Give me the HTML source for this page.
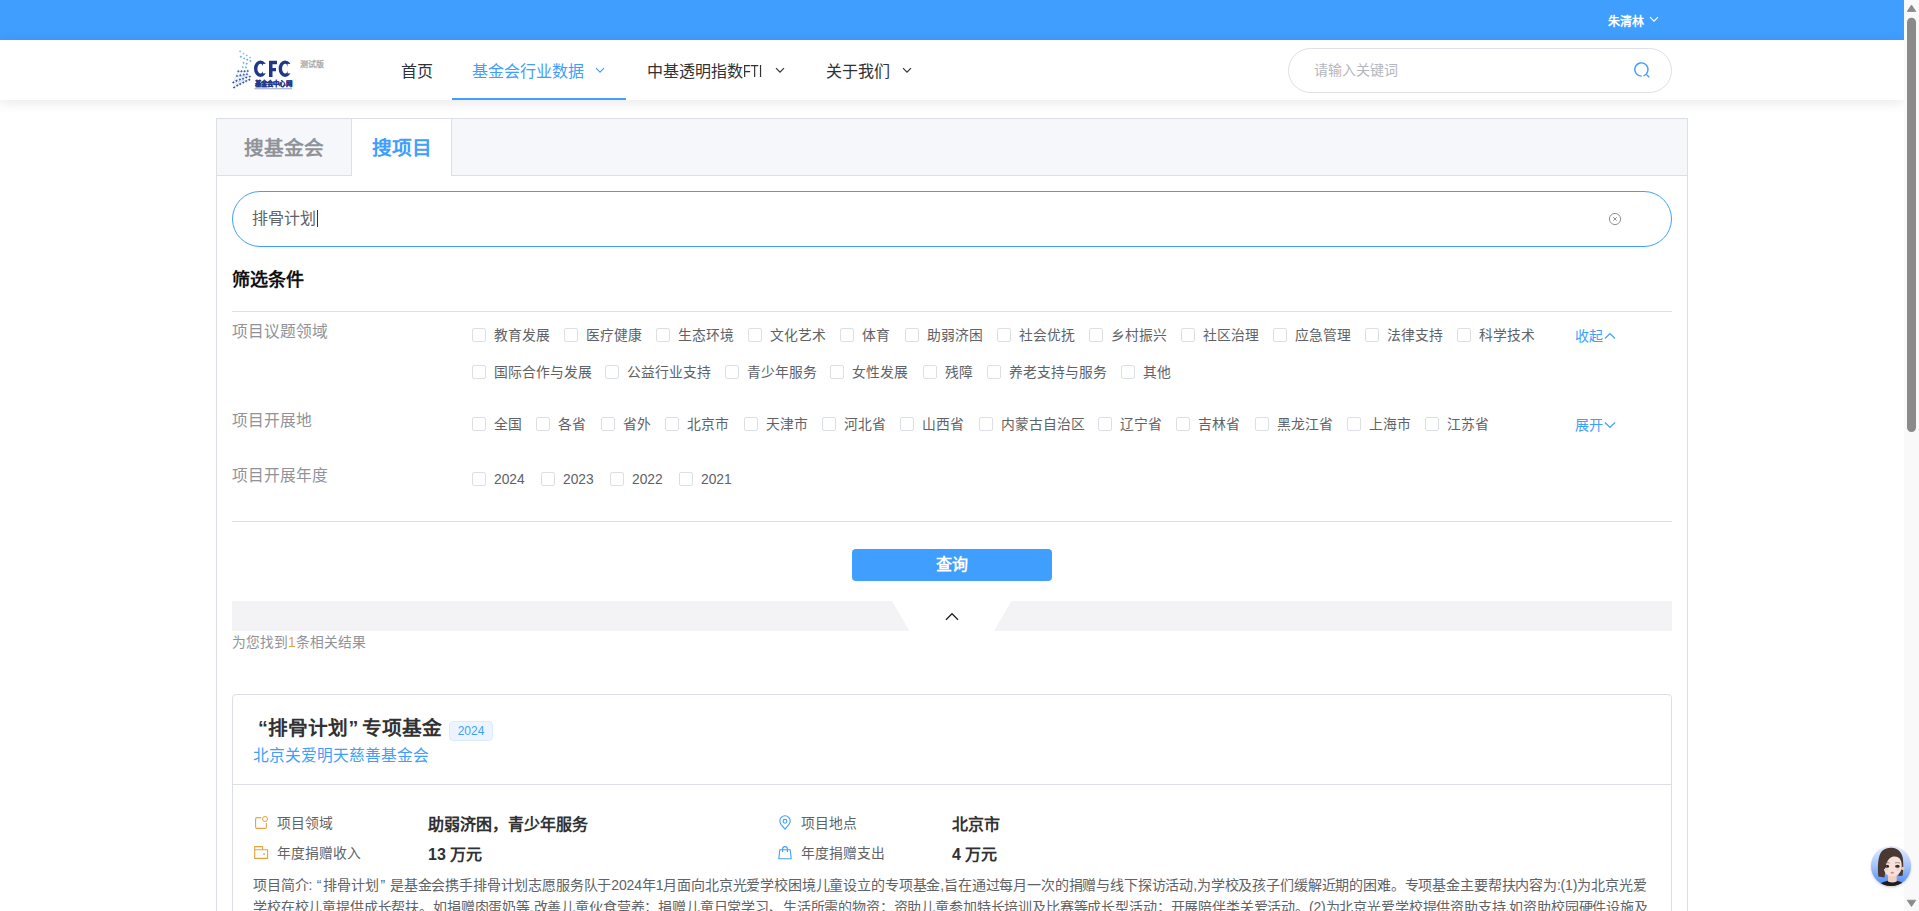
<!DOCTYPE html>
<html lang="zh-CN">
<head>
<meta charset="utf-8">
<title>搜项目</title>
<style>
*{box-sizing:border-box;margin:0;padding:0}
html,body{width:1919px;height:911px;overflow:hidden;background:#fff}
body{font-family:"Liberation Sans",sans-serif;position:relative;color:#303133}
.abs{position:absolute}
.nw{white-space:nowrap}
#topbar{position:absolute;left:0;top:0;width:1904px;height:40px;background:#409eff}
#user{position:absolute;left:1608px;top:13px;font-size:12px;font-weight:bold;color:#fff;line-height:18px;white-space:nowrap}
#header{position:absolute;left:0;top:40px;width:1904px;height:60px;background:#fff;box-shadow:0 2px 12px 0 rgba(0,0,0,.1);z-index:2}
.nav{position:absolute;top:2px;height:60px;font-size:16px;line-height:60px;color:#303133;white-space:nowrap}
.nav.active{color:#409eff}
.uline{position:absolute;left:452px;top:58px;width:174px;height:2px;background:#409eff}
#hsearch{position:absolute;left:1288px;top:8px;width:384px;height:45px;border:1px solid #dcdfe6;border-radius:23px}
#hsearch .ph{position:absolute;left:25px;top:0px;line-height:43px;font-size:14px;color:#b4b7bd;white-space:nowrap}
#panel{position:absolute;left:216px;top:118px;width:1472px;height:800px;border:1px solid #dcdfe6;border-bottom:none}
#tabbar{position:absolute;left:0;top:0;width:1470px;height:57px;background:#f5f7fa;border-bottom:1px solid #dcdfe6}
.tab{position:absolute;top:0;height:57px;font-size:19.7px;font-weight:bold;line-height:59px;color:#909399;white-space:nowrap}
.tab.active{background:#fff;color:#409eff;border-left:1px solid #dcdfe6;border-right:1px solid #dcdfe6}
#kw{position:absolute;left:232px;top:191px;width:1440px;height:56px;border:1px solid #409eff;border-radius:28px;background:#fff}
#kw .t{position:absolute;left:19px;top:0;line-height:54px;font-size:16px;color:#606266;white-space:nowrap}
#kw .caret{position:absolute;left:83.5px;top:18px;width:1px;height:17px;background:#303133}
.h3{position:absolute;left:232px;top:267px;font-size:18px;font-weight:bold;color:#111;line-height:26px;white-space:nowrap}
.hr{position:absolute;left:232px;width:1440px;height:1px;background:#dcdfe6}
.flabel{position:absolute;left:232px;font-size:15.75px;color:#909399;line-height:22px;white-space:nowrap}
.cb{position:absolute;height:14px;white-space:nowrap;font-size:13.8px;color:#606266}
.cb i{position:absolute;left:0;top:0;width:14px;height:14px;border:1px solid #dcdfe6;border-radius:2px;background:#fff}
.cb span{position:absolute;left:22px;top:-2px;line-height:20px}
.more{position:absolute;left:1575px;font-size:14px;color:#409eff;line-height:20px;white-space:nowrap}
#btn{position:absolute;left:852px;top:549px;width:200px;height:32px;background:#409eff;border-radius:4px;color:#fff;font-size:16px;font-weight:bold;text-align:center;line-height:32px}
#strip{position:absolute;left:232px;top:601px;width:1440px;height:30px;background:#f3f3f5}
#count{position:absolute;left:232px;top:632.5px;font-size:13.8px;font-weight:500;color:#909399;line-height:20px;white-space:nowrap}
#card{position:absolute;left:232px;top:694px;width:1440px;height:300px;border:1px solid #dcdfe6;border-radius:4px}
#cardhead{position:absolute;left:0;top:0;width:1438px;height:90px;border-bottom:1px solid #dcdfe6}
.ctitle{position:absolute;left:25px;top:18px;font-size:19.7px;font-weight:bold;color:#303133;line-height:30px;white-space:nowrap}
.tag{position:absolute;left:216px;top:26px;width:44px;height:20px;background:#ecf5ff;border:1px solid #d9ecff;border-radius:4px;color:#409eff;font-size:12px;line-height:18px;text-align:center}
.csub{position:absolute;left:20px;top:49px;font-size:15.75px;color:#409eff;line-height:24px;white-space:nowrap}
.dl{position:absolute;font-size:13.8px;color:#606266;line-height:22px;white-space:nowrap}
.dv{position:absolute;font-size:16px;font-weight:bold;color:#303133;line-height:22px;white-space:nowrap}
.para{position:absolute;font-size:14px;color:#606266;line-height:22px;white-space:nowrap;letter-spacing:-0.155px}
.qo{margin-left:0.8px;margin-right:2px}.qc{margin-left:2px;margin-right:1px}
#sb{position:absolute;left:1904px;top:0;width:15px;height:911px;background:#f9f9f9;z-index:3}
</style>
</head>
<body>
<div id="topbar">
  <div id="user">朱清林</div>
  <svg class="abs" style="left:1649px;top:16px" width="10" height="7" viewBox="0 0 10 7"><path d="M1 1.2 L5 5.2 L9 1.2" fill="none" stroke="#fff" stroke-width="1.2"/></svg>
</div>

<div id="header">
  <svg class="abs" style="left:228px;top:6px" width="100" height="50" viewBox="228 46 100 50">
    <g stroke="#6b8fc4" stroke-width="0.35" fill="none" opacity="0.7">
      <path d="M238.3 71.3 L247.8 71 M237 76 L249.9 76.6 M233.3 82.4 L249.3 79.7 M234.1 87.4 L246.2 81.1 M238.3 71.3 L233.3 82.4 M241.4 71.3 L234.1 87.4 M244.6 71.3 L237.2 85.5 M247.8 71 L240.1 84"/>
    </g>
    <path d="M240.1 49.95 L240.57 50.83 L241.45 51.3 L240.57 51.77 L240.1 52.65 L239.63 51.77 L238.75 51.3 L239.63 50.83Z" fill="#7cc3db"/><path d="M243.6 52.25 L244.07 53.13 L244.95 53.6 L244.07 54.07 L243.6 54.95 L243.13 54.07 L242.25 53.6 L243.13 53.13Z" fill="#7cc3db"/><path d="M246.7 54.15 L247.17 55.03 L248.05 55.5 L247.17 55.97 L246.7 56.85 L246.23 55.97 L245.35 55.5 L246.23 55.03Z" fill="#7cc3db"/><path d="M250.1 56.25 L250.57 57.13 L251.45 57.6 L250.57 58.07 L250.1 58.95 L249.63 58.07 L248.75 57.6 L249.63 57.13Z" fill="#7cc3db"/><path d="M240.9 55.45 L241.37 56.33 L242.25 56.8 L241.37 57.27 L240.9 58.15 L240.43 57.27 L239.55 56.8 L240.43 56.33Z" fill="#5aa6cc"/><path d="M244.1 57.05 L244.57 57.93 L245.45 58.4 L244.57 58.87 L244.1 59.75 L243.63 58.87 L242.75 58.4 L243.63 57.93Z" fill="#5aa6cc"/><path d="M247.2 58.35 L247.67 59.23 L248.55 59.7 L247.67 60.17 L247.2 61.05 L246.73 60.17 L245.85 59.7 L246.73 59.23Z" fill="#5aa6cc"/><path d="M250.4 59.65 L250.87 60.53 L251.75 61.0 L250.87 61.47 L250.4 62.35 L249.93 61.47 L249.05 61.0 L249.93 60.53Z" fill="#5aa6cc"/><path d="M243.6 61.55 L244.07 62.43 L244.95 62.9 L244.07 63.37 L243.6 64.25 L243.13 63.37 L242.25 62.9 L243.13 62.43Z" fill="#5aa6cc"/><path d="M246.7 62.35 L247.17 63.23 L248.05 63.7 L247.17 64.17 L246.7 65.05 L246.23 64.17 L245.35 63.7 L246.23 63.23Z" fill="#5aa6cc"/><path d="M242.8 65.75 L243.27 66.63 L244.15 67.1 L243.27 67.57 L242.8 68.45 L242.33 67.57 L241.45 67.1 L242.33 66.63Z" fill="#5aa6cc"/><path d="M245.9 65.95 L246.37 66.83 L247.25 67.3 L246.37 67.77 L245.9 68.65 L245.43 67.77 L244.55 67.3 L245.43 66.83Z" fill="#5aa6cc"/><path d="M238.3 69.85 L238.81 70.79 L239.75 71.3 L238.81 71.81 L238.3 72.75 L237.79 71.81 L236.85 71.3 L237.79 70.79Z" fill="#3a62a8"/><path d="M241.4 69.85 L241.91 70.79 L242.85 71.3 L241.91 71.81 L241.4 72.75 L240.89 71.81 L239.95 71.3 L240.89 70.79Z" fill="#3a62a8"/><path d="M244.6 69.85 L245.11 70.79 L246.05 71.3 L245.11 71.81 L244.6 72.75 L244.09 71.81 L243.15 71.3 L244.09 70.79Z" fill="#3a62a8"/><path d="M247.8 69.55 L248.31 70.49 L249.25 71.0 L248.31 71.51 L247.8 72.45 L247.29 71.51 L246.35 71.0 L247.29 70.49Z" fill="#3a62a8"/><path d="M237.0 74.55 L237.51 75.49 L238.45 76.0 L237.51 76.51 L237.0 77.45 L236.49 76.51 L235.55 76.0 L236.49 75.49Z" fill="#3a62a8"/><path d="M240.4 73.85 L240.91 74.79 L241.85 75.3 L240.91 75.81 L240.4 76.75 L239.89 75.81 L238.95 75.3 L239.89 74.79Z" fill="#3a62a8"/><path d="M243.8 73.25 L244.31 74.19 L245.25 74.7 L244.31 75.21 L243.8 76.15 L243.29 75.21 L242.35 74.7 L243.29 74.19Z" fill="#3a62a8"/><path d="M247.0 72.75 L247.51 73.69 L248.45 74.2 L247.51 74.71 L247.0 75.65 L246.49 74.71 L245.55 74.2 L246.49 73.69Z" fill="#3a62a8"/><path d="M249.9 75.15 L250.41 76.09 L251.35 76.6 L250.41 77.11 L249.9 78.05 L249.39 77.11 L248.45 76.6 L249.39 76.09Z" fill="#3a62a8"/><path d="M233.3 80.95 L233.81 81.89 L234.75 82.4 L233.81 82.91 L233.3 83.85 L232.79 82.91 L231.85 82.4 L232.79 81.89Z" fill="#2d4f9c"/><path d="M236.4 79.35 L236.91 80.29 L237.85 80.8 L236.91 81.31 L236.4 82.25 L235.89 81.31 L234.95 80.8 L235.89 80.29Z" fill="#2d4f9c"/><path d="M239.9 78.05 L240.41 78.99 L241.35 79.5 L240.41 80.01 L239.9 80.95 L239.39 80.01 L238.45 79.5 L239.39 78.99Z" fill="#2d4f9c"/><path d="M243.0 77.25 L243.51 78.19 L244.45 78.7 L243.51 79.21 L243.0 80.15 L242.49 79.21 L241.55 78.7 L242.49 78.19Z" fill="#2d4f9c"/><path d="M246.2 76.15 L246.71 77.09 L247.65 77.6 L246.71 78.11 L246.2 79.05 L245.69 78.11 L244.75 77.6 L245.69 77.09Z" fill="#2d4f9c"/><path d="M249.3 78.25 L249.81 79.19 L250.75 79.7 L249.81 80.21 L249.3 81.15 L248.79 80.21 L247.85 79.7 L248.79 79.19Z" fill="#2d4f9c"/><path d="M234.1 85.95 L234.61 86.89 L235.55 87.4 L234.61 87.91 L234.1 88.85 L233.59 87.91 L232.65 87.4 L233.59 86.89Z" fill="#2d4f9c"/><path d="M237.2 84.05 L237.71 84.99 L238.65 85.5 L237.71 86.01 L237.2 86.95 L236.69 86.01 L235.75 85.5 L236.69 84.99Z" fill="#2d4f9c"/><path d="M240.1 82.55 L240.61 83.49 L241.55 84.0 L240.61 84.51 L240.1 85.45 L239.59 84.51 L238.65 84.0 L239.59 83.49Z" fill="#2d4f9c"/><path d="M243.3 80.95 L243.81 81.89 L244.75 82.4 L243.81 82.91 L243.3 83.85 L242.79 82.91 L241.85 82.4 L242.79 81.89Z" fill="#2d4f9c"/><path d="M246.2 79.65 L246.71 80.59 L247.65 81.1 L246.71 81.61 L246.2 82.55 L245.69 81.61 L244.75 81.1 L245.69 80.59Z" fill="#2d4f9c"/>
    <ellipse cx="260.45" cy="68.65" rx="4.75" ry="6.55" fill="none" stroke="#1f3786" stroke-width="3.4"/><rect x="262.9" y="63.9" width="5.2" height="9.5" fill="#fff"/>
    <ellipse cx="285.1" cy="68.65" rx="4.75" ry="6.55" fill="none" stroke="#1f3786" stroke-width="3.4"/><rect x="287.6" y="63.9" width="5.2" height="9.5" fill="#fff"/>
    <path d="M269 60.7 H277 V64.2 H272.5 V68 H276 V71.2 H272.5 V77 H269 Z" fill="#1f3786"/>
    <text x="254.8" y="86" font-size="6.3" font-weight="900" fill="#1f3786" stroke="#1f3786" stroke-width="0.25" textLength="37" lengthAdjust="spacingAndGlyphs">基金会中心网</text>
    <rect x="254.5" y="88.1" width="37.5" height="1.2" fill="#aab4d2"/>
    <text x="299.5" y="66.6" font-size="8" font-weight="bold" fill="#a7a9ae" textLength="24" lengthAdjust="spacingAndGlyphs">测试版</text>
  </svg>
  <div class="nav" style="left:401px">首页</div>
  <div class="nav active" style="left:472px">基金会行业数据</div>
  <svg class="abs" style="left:595px;top:26.8px" width="10" height="7" viewBox="0 0 10 7"><path d="M1 1.2 L5 5.2 L9 1.2" fill="none" stroke="#409eff" stroke-width="1.15"/></svg>
  <div class="uline"></div>
  <div class="nav" style="left:647px">中基透明指数<span style="display:inline-block;transform:scaleX(0.8);transform-origin:0 50%">FTI</span></div>
  <svg class="abs" style="left:775px;top:26.8px" width="10" height="7" viewBox="0 0 10 7"><path d="M1 1.2 L5 5.2 L9 1.2" fill="none" stroke="#303133" stroke-width="1.15"/></svg>
  <div class="nav" style="left:826px">关于我们</div>
  <svg class="abs" style="left:902px;top:26.8px" width="10" height="7" viewBox="0 0 10 7"><path d="M1 1.2 L5 5.2 L9 1.2" fill="none" stroke="#303133" stroke-width="1.15"/></svg>
  <div id="hsearch">
    <div class="ph">请输入关键词</div>
    <svg class="abs" style="left:344px;top:12px" width="18" height="18" viewBox="0 0 18 18"><path d="M8.8 15.1 A6.6 6.6 0 1 1 10.4 14.8" fill="none" stroke="#409eff" stroke-width="1.35"/><path d="M13.4 13.6 L16.3 16.2" stroke="#409eff" stroke-width="1.35"/></svg>
  </div>
</div>

<div id="panel">
  <div id="tabbar"></div>
  <div class="tab" style="left:0;width:135px;padding-left:27px">搜基金会</div>
  <div class="tab active" style="left:134px;width:101px;padding-left:20px">搜项目</div>
</div>

<div id="kw"><div class="t">排骨计划</div><div class="caret"></div>
  <svg class="abs" style="left:1375px;top:20px" width="14" height="14" viewBox="0 0 14 14"><circle cx="7" cy="7" r="5.6" fill="none" stroke="#909399" stroke-width="1"/><path d="M5.3 5.3 L8.7 8.7 M8.7 5.3 L5.3 8.7" stroke="#909399" stroke-width="1"/></svg>
</div>

<div class="h3">筛选条件</div>
<div class="hr" style="top:311px"></div>

<div class="flabel" style="top:321px">项目议题领域</div>
<div class="flabel" style="top:410px">项目开展地</div>
<div class="flabel" style="top:465px">项目开展年度</div>
<div class="cb" style="left:472px;top:328px"><i></i><span>教育发展</span></div>
<div class="cb" style="left:564px;top:328px"><i></i><span>医疗健康</span></div>
<div class="cb" style="left:656px;top:328px"><i></i><span>生态环境</span></div>
<div class="cb" style="left:748px;top:328px"><i></i><span>文化艺术</span></div>
<div class="cb" style="left:840px;top:328px"><i></i><span>体育</span></div>
<div class="cb" style="left:905px;top:328px"><i></i><span>助弱济困</span></div>
<div class="cb" style="left:997px;top:328px"><i></i><span>社会优抚</span></div>
<div class="cb" style="left:1089px;top:328px"><i></i><span>乡村振兴</span></div>
<div class="cb" style="left:1181px;top:328px"><i></i><span>社区治理</span></div>
<div class="cb" style="left:1273px;top:328px"><i></i><span>应急管理</span></div>
<div class="cb" style="left:1365px;top:328px"><i></i><span>法律支持</span></div>
<div class="cb" style="left:1457px;top:328px"><i></i><span>科学技术</span></div>
<div class="cb" style="left:472px;top:365px"><i></i><span>国际合作与发展</span></div>
<div class="cb" style="left:605px;top:365px"><i></i><span>公益行业支持</span></div>
<div class="cb" style="left:725px;top:365px"><i></i><span>青少年服务</span></div>
<div class="cb" style="left:830px;top:365px"><i></i><span>女性发展</span></div>
<div class="cb" style="left:923px;top:365px"><i></i><span>残障</span></div>
<div class="cb" style="left:987px;top:365px"><i></i><span>养老支持与服务</span></div>
<div class="cb" style="left:1121px;top:365px"><i></i><span>其他</span></div>
<div class="cb" style="left:472px;top:417px"><i></i><span>全国</span></div>
<div class="cb" style="left:536px;top:417px"><i></i><span>各省</span></div>
<div class="cb" style="left:601px;top:417px"><i></i><span>省外</span></div>
<div class="cb" style="left:665px;top:417px"><i></i><span>北京市</span></div>
<div class="cb" style="left:744px;top:417px"><i></i><span>天津市</span></div>
<div class="cb" style="left:822px;top:417px"><i></i><span>河北省</span></div>
<div class="cb" style="left:900px;top:417px"><i></i><span>山西省</span></div>
<div class="cb" style="left:979px;top:417px"><i></i><span>内蒙古自治区</span></div>
<div class="cb" style="left:1098px;top:417px"><i></i><span>辽宁省</span></div>
<div class="cb" style="left:1176px;top:417px"><i></i><span>吉林省</span></div>
<div class="cb" style="left:1255px;top:417px"><i></i><span>黑龙江省</span></div>
<div class="cb" style="left:1347px;top:417px"><i></i><span>上海市</span></div>
<div class="cb" style="left:1425px;top:417px"><i></i><span>江苏省</span></div>
<div class="cb" style="left:472px;top:472px"><i></i><span>2024</span></div>
<div class="cb" style="left:541px;top:472px"><i></i><span>2023</span></div>
<div class="cb" style="left:610px;top:472px"><i></i><span>2022</span></div>
<div class="cb" style="left:679px;top:472px"><i></i><span>2021</span></div>
<div class="more" style="top:326px">收起</div>
<svg class="abs" style="left:1604px;top:332px" width="12" height="8" viewBox="0 0 12 8"><path d="M1 6.5 L6 1.5 L11 6.5" fill="none" stroke="#409eff" stroke-width="1.2"/></svg>
<div class="more" style="top:415px">展开</div>
<svg class="abs" style="left:1604px;top:421px" width="12" height="8" viewBox="0 0 12 8"><path d="M1 1.5 L6 6.5 L11 1.5" fill="none" stroke="#409eff" stroke-width="1.2"/></svg>

<div class="hr" style="top:521px"></div>
<div id="btn">查询</div>
<div id="strip"></div>
<svg class="abs" style="left:892px;top:601px" width="120" height="30" viewBox="0 0 120 30"><path d="M0 0 H119.5 L102 30 H17.5 Z" fill="#fff"/><path d="M54 18.7 L60 12.7 L66 18.7" fill="none" stroke="#222" stroke-width="1.3"/></svg>
<div id="count">为您找到<span style="color:#e6a23c">1</span>条相关结果</div>

<div id="card">
  <div id="cardhead">
    <div class="ctitle">“排骨计划<span style="margin-left:0.6px;margin-right:-1.5px">”</span> 专项基金</div>
    <div class="tag">2024</div>
    <div class="csub">北京关爱明天慈善基金会</div>
  </div>
</div>
<svg class="abs" style="left:250px;top:812px" width="22" height="52" viewBox="250 812 22 52">
  <path d="M261.2 817.6 H257 Q255.6 817.6 255.6 819 V827 Q255.6 828.4 257 828.4 H265 Q266.4 828.4 266.4 827 V823" fill="none" stroke="#e6a23c" stroke-width="1.1"/>
  <circle cx="265" cy="819" r="2.5" fill="none" stroke="#e6a23c" stroke-width="1"/>
  <path d="M254.7 849.8 H267.6 V858.4 H254.7 Z M254.7 849.8 V846.6 H262.6 V849.8" fill="none" stroke="#e6a23c" stroke-width="1.1"/>
  <rect x="263.3" y="853.3" width="1.6" height="1.6" fill="#e6a23c"/>
</svg>
<div class="dl" style="left:277px;top:813px">项目领域</div>
<div class="dv" style="left:428px;top:814px">助弱济困，青少年服务</div>
<div class="dl" style="left:277px;top:843px">年度捐赠收入</div>
<div class="dv" style="left:428px;top:844px">13 万元</div>
<svg class="abs" style="left:774px;top:812px" width="22" height="52" viewBox="774 812 22 52">
  <path d="M785 829.2 L781.2 824.6 Q779.8 822.8 779.8 821 A5.2 5.2 0 0 1 790.2 821 Q790.2 822.8 788.8 824.6 Z" fill="none" stroke="#409eff" stroke-width="1.1" stroke-linejoin="round"/>
  <circle cx="785" cy="821.3" r="1.9" fill="none" stroke="#409eff" stroke-width="1.1"/>
  <path d="M779.8 849.8 H790.2 L791.2 858.8 H778.8 Z" fill="none" stroke="#409eff" stroke-width="1.1" stroke-linejoin="round"/>
  <path d="M782.6 852 V849 A2.4 2.4 0 0 1 787.4 849 V852" fill="none" stroke="#409eff" stroke-width="1.1"/>
</svg>
<div class="dl" style="left:801px;top:813px">项目地点</div>
<div class="dv" style="left:952px;top:814px">北京市</div>
<div class="dl" style="left:801px;top:843px">年度捐赠支出</div>
<div class="dv" style="left:952px;top:844px">4 万元</div>
<div class="para" style="left:253px;top:874px">项目简介: <span class="qo">“</span>排骨计划<span class="qc">”</span> 是基金会携手排骨计划志愿服务队于2024年1月面向北京光爱学校困境儿童设立的专项基金,旨在通过每月一次的捐赠与线下探访活动,为学校及孩子们缓解近期的困难。专项基金主要帮扶内容为:(1)为北京光爱<br>学校在校儿童提供成长帮扶。如捐赠肉蛋奶等,改善儿童伙食营养；捐赠儿童日常学习、生活所需的物资；资助儿童参加特长培训及比赛等成长型活动；开展陪伴类关爱活动。(2)为北京光爱学校提供资助支持,如资助校园硬件设施及</div>

<div id="sb">
  <svg class="abs" style="left:0;top:0" width="15" height="911" viewBox="1904 0 15 911">
    <path d="M1907.2 11.5 L1911.5 5 L1915.8 11.5 Z" fill="#8a8a8a" stroke="#8a8a8a" stroke-width="0.8" stroke-linejoin="round"/>
    <rect x="1907" y="17.8" width="9" height="414.2" rx="4.5" fill="#8a8a8a"/>
    <path d="M1907.2 900.2 L1915.8 900.2 L1911.5 906.5 Z" fill="#8a8a8a" stroke="#8a8a8a" stroke-width="0.8" stroke-linejoin="round"/>
  </svg>
</div>

<svg class="abs" style="left:1866px;top:842px;z-index:5" width="50" height="50" viewBox="1866 842 50 50">
  <defs>
    <linearGradient id="ag" x1="0" y1="0" x2="0" y2="1">
      <stop offset="0" stop-color="#e6eeff"/><stop offset="0.5" stop-color="#a3c3fb"/><stop offset="1" stop-color="#4a88f4"/>
    </linearGradient>
    <clipPath id="ac"><circle cx="1891" cy="866" r="20"/></clipPath>
    <filter id="ash" x="-30%" y="-30%" width="160%" height="160%"><feGaussianBlur stdDeviation="1.2"/></filter>
  </defs>
  <circle cx="1891" cy="867.5" r="20" fill="#000" opacity="0.18" filter="url(#ash)"/>
  <circle cx="1891" cy="866" r="20" fill="url(#ag)"/>
  <g clip-path="url(#ac)">
    <path d="M1876 890 Q1879 882 1888 880.8 Q1892.3 883 1896.7 880.8 Q1905 882 1907 890 Z" fill="#1d1d20"/>
    <path d="M1878.3 876.6 C1877.4 866 1877.8 856 1882 851 C1885 848 1889 847.6 1892 847.8 C1897 848.2 1901 851 1902.6 857 C1903.6 862 1903.4 870 1902.6 875.8 L1898.5 876 L1898 866 L1886 866 L1884.5 877.6 Z" fill="#4a3933"/>
    <path d="M1888 873 H1896.7 V881.6 Q1892.3 883.4 1888 881.6 Z" fill="#f1cfc3"/>
    <path d="M1883.6 866 C1883.6 858.5 1887 855.5 1892.6 855.5 C1898.2 855.5 1901.7 858.5 1901.7 866 C1901.7 872.2 1898 876.3 1892.3 876.3 C1886.8 876.3 1883.6 872.2 1883.6 866Z" fill="#f7e2da"/>
    <circle cx="1902.7" cy="868.4" r="1.7" fill="#f0c6b4"/>
    <path d="M1882.8 869 C1882.3 860.5 1885 853.6 1892 852.2 C1897.5 851.5 1901.3 854.2 1902.2 860.5 C1899.5 857.2 1896.5 856.2 1893.3 856.6 C1889.3 857.4 1886.2 861.5 1885 869 Z" fill="#4a3933"/>
    <path d="M1884.4 863.2 Q1887 862 1889.6 863" fill="none" stroke="#6b5148" stroke-width="0.6"/>
    <path d="M1895 863 Q1897.6 862 1900 863.2" fill="none" stroke="#6b5148" stroke-width="0.6"/>
    <ellipse cx="1886.9" cy="866.3" rx="2.3" ry="1.55" fill="#2b2428"/>
    <ellipse cx="1897.4" cy="866.3" rx="2.3" ry="1.55" fill="#2b2428"/>
    <circle cx="1886.4" cy="865.9" r="0.5" fill="#8a8a95"/>
    <circle cx="1896.9" cy="865.9" r="0.5" fill="#8a8a95"/>
    <ellipse cx="1886.2" cy="869.6" rx="2" ry="1.1" fill="#f0b5ad" opacity="0.45"/>
    <ellipse cx="1898.2" cy="869.6" rx="2" ry="1.1" fill="#f0b5ad" opacity="0.45"/>
    <ellipse cx="1892.3" cy="872.8" rx="1.8" ry="1" fill="#df8a7c"/>
  </g>
</svg>
</body>
</html>
